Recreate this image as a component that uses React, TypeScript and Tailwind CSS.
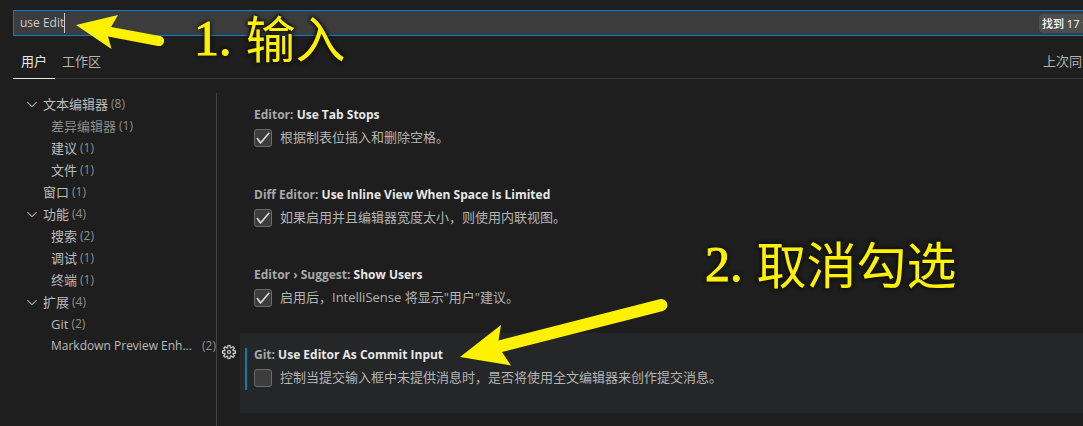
import { VscCheck, VscChevronDown, VscGear } from "react-icons/vsc";

type TreeRow = {
  label: string;
  count: number;
  level: 0 | 1;
  open?: boolean;
  dim?: boolean;
  latin?: boolean;
};

const tree: TreeRow[] = [
  { label: "文本编辑器", count: 8, level: 0, open: true },
  { label: "差异编辑器", count: 1, level: 1, dim: true },
  { label: "建议", count: 1, level: 1 },
  { label: "文件", count: 1, level: 1 },
  { label: "窗口", count: 1, level: 0 },
  { label: "功能", count: 4, level: 0, open: true },
  { label: "搜索", count: 2, level: 1 },
  { label: "调试", count: 1, level: 1 },
  { label: "终端", count: 1, level: 1 },
  { label: "扩展", count: 4, level: 0, open: true },
  { label: "Git", count: 2, level: 1 },
  { label: "Markdown Preview Enh...", count: 2, level: 1, latin: true },
];

type Setting = {
  id: string;
  category: string;
  name: string;
  description: string;
  checked: boolean;
  focused?: boolean;
};

const settings: Setting[] = [
  { id: "tab-stops", category: "Editor:", name: "Use Tab Stops", description: "根据制表位插入和删除空格。", checked: true },
  { id: "inline-view", category: "Diff Editor:", name: "Use Inline View When Space Is Limited", description: "如果启用并且编辑器宽度太小，则使用内联视图。", checked: true },
  { id: "show-users", category: "Editor › Suggest:", name: "Show Users", description: "启用后，IntelliSense 将显示\"用户\"建议。", checked: true },
  { id: "commit-input", category: "Git:", name: "Use Editor As Commit Input", description: "控制当提交输入框中未提供消息时，是否将使用全文编辑器来创作提交消息。", checked: false, focused: true },
];

function SearchBox() {
  return (
    <label className="-mr-16 flex h-[26px] items-center border border-[#007fd4] bg-[#3c3c3c] pl-1.5">
      <input
        aria-label="搜索设置"
        defaultValue="use Edit"
        className="field-sizing-content bg-transparent text-xs text-[#cccccc] caret-transparent outline-none"
      />
      <span className="h-5 w-px bg-[#cccccc]" />
      <span className="mr-px ml-auto w-[106px] rounded-sm bg-[#4d4d4d] px-[3px] text-[11px] leading-[19px] font-medium whitespace-nowrap text-white">
        找到 17 个设置
      </span>
    </label>
  );
}

function Tabs() {
  return (
    <div className="-mr-16 flex h-[43px] items-end border-b border-[#3a3a3a] text-[13px] text-[#b4b4b4]">
      <button className="-mb-px h-[34px] border-b border-[#e7e7e7] px-2 text-[#e7e7e7]">用户</button>
      <button className="-mb-px h-[34px] border-b border-transparent px-[7px]">工作区</button>
      <button className="-mb-px ml-auto h-[34px] w-[104px] border-b border-transparent text-left whitespace-nowrap">上次同步时间</button>
    </div>
  );
}

function Tree() {
  return (
    <nav className="w-[204px] shrink-0 border-r border-[#424242]">
      <ul className="text-[13px] leading-[22px] text-[#bcbcbc]">
        {tree.map((row) => (
          <li key={row.label} className={row.level === 1 ? "flex pl-[38px]" : "flex pl-[11px]"}>
            {row.level === 0 && (
              <span className="flex w-[19px] shrink-0 items-center">
                {row.open && <VscChevronDown size={16} />}
              </span>
            )}
            <span
              className={
                row.dim
                  ? "whitespace-nowrap text-[#8c8c8c]"
                  : row.latin
                    ? "flex-1 text-xs leading-[22px] whitespace-nowrap"
                    : "whitespace-nowrap"
              }
            >
              {row.label}
            </span>
            <span className="ml-[3px] shrink-0 text-xs leading-[22px] text-[#8f8f8f]">({row.count})</span>
          </li>
        ))}
      </ul>
    </nav>
  );
}

function SettingRow({ setting }: { setting: Setting }) {
  return (
    <li className="flex h-20">
      <div className="flex w-[23px] shrink-0 justify-center pt-[11px]">
        {setting.focused && (
          <button aria-label="更多操作" className="size-4 text-[#d4d4d4]">
            <VscGear size={16} strokeWidth={0.2} />
          </button>
        )}
      </div>
      <div className={setting.focused ? "flex-1 bg-[#252628] pt-[15px] pl-[5px]" : "flex-1 pt-[15px] pl-[5px]"}>
        <div className={setting.focused ? "h-[42px] border-l-2 border-[#0c7d9d] pl-[7px]" : "h-[42px] border-l-2 border-transparent pl-[7px]"}>
          <h3 className="text-xs leading-[13px] font-bold whitespace-nowrap text-[#a8a8a8]">
            {setting.category} <span className="text-[#e7e7e7]">{setting.name}</span>
          </h3>
          <div className="flex items-start gap-2 pt-1">
            <span className="mt-1 grid size-[18px] shrink-0 place-items-center">
              <input
                id={setting.id}
                type="checkbox"
                defaultChecked={setting.checked}
                className="peer size-[18px] appearance-none rounded-[3px] border border-[#6b6b6b] bg-[#3c3c3c] [grid-area:1/1]"
              />
              <VscCheck size={16} strokeWidth={0.6} className="pointer-events-none hidden text-[#f0f0f0] [grid-area:1/1] peer-checked:block" />
            </span>
            <label htmlFor={setting.id} className="pt-0.5 text-[13px] leading-5 whitespace-nowrap text-[#b4b4b4]">
              {setting.description}
            </label>
          </div>
        </div>
      </div>
    </li>
  );
}

function Note({ number, text, className }: { number: string; text: string; className: string }) {
  return (
    <p
      className={
        "pointer-events-none absolute flex items-start gap-3.5 font-['Liberation_Serif','Noto_Sans_CJK_SC',serif] text-[50px] whitespace-nowrap text-[#fff200] [text-shadow:0_0_3px_#111,0_0_4px_#111,0_0_5px_#111] " +
        className
      }
    >
      <span className="leading-[50px] [-webkit-text-stroke:1px_#fff200]">{number}.</span>
      <span className="leading-[56px]">{text}</span>
    </p>
  );
}

export default function App() {
  return (
    <div className="relative min-h-screen overflow-hidden bg-[#1e1e1e] font-['Open_Sans','Noto_Sans_CJK_SC',sans-serif]">
      <div className="flex min-h-screen flex-col pt-2.5 pl-[13px]">
        <SearchBox />
        <Tabs />
        <div className="flex flex-1 pt-3.5">
          <Tree />
          <ul className="flex-1">
            {settings.map((s) => (
              <SettingRow key={s.id} setting={s} />
            ))}
          </ul>
        </div>
      </div>

      <svg className="pointer-events-none absolute top-0 left-0" width="700" height="380" fill="#fff200" aria-hidden="true">
        <path d="M76 25 L118 15 L111 27 L160 36 A5 5 0 0 1 158 46 L108 36.500 L111.500 49 Z" />
        <path d="M460 357 L501 325 L498.500 340.500 L659.500 299.200 A6 6 0 0 1 663 311 L502 352 L511 365.500 Z" />
      </svg>
      <Note number="1" text="输入" className="top-[13px] left-[194px]" />
      <Note number="2" text="取消勾选" className="top-[239px] left-[705px]" />
    </div>
  );
}
